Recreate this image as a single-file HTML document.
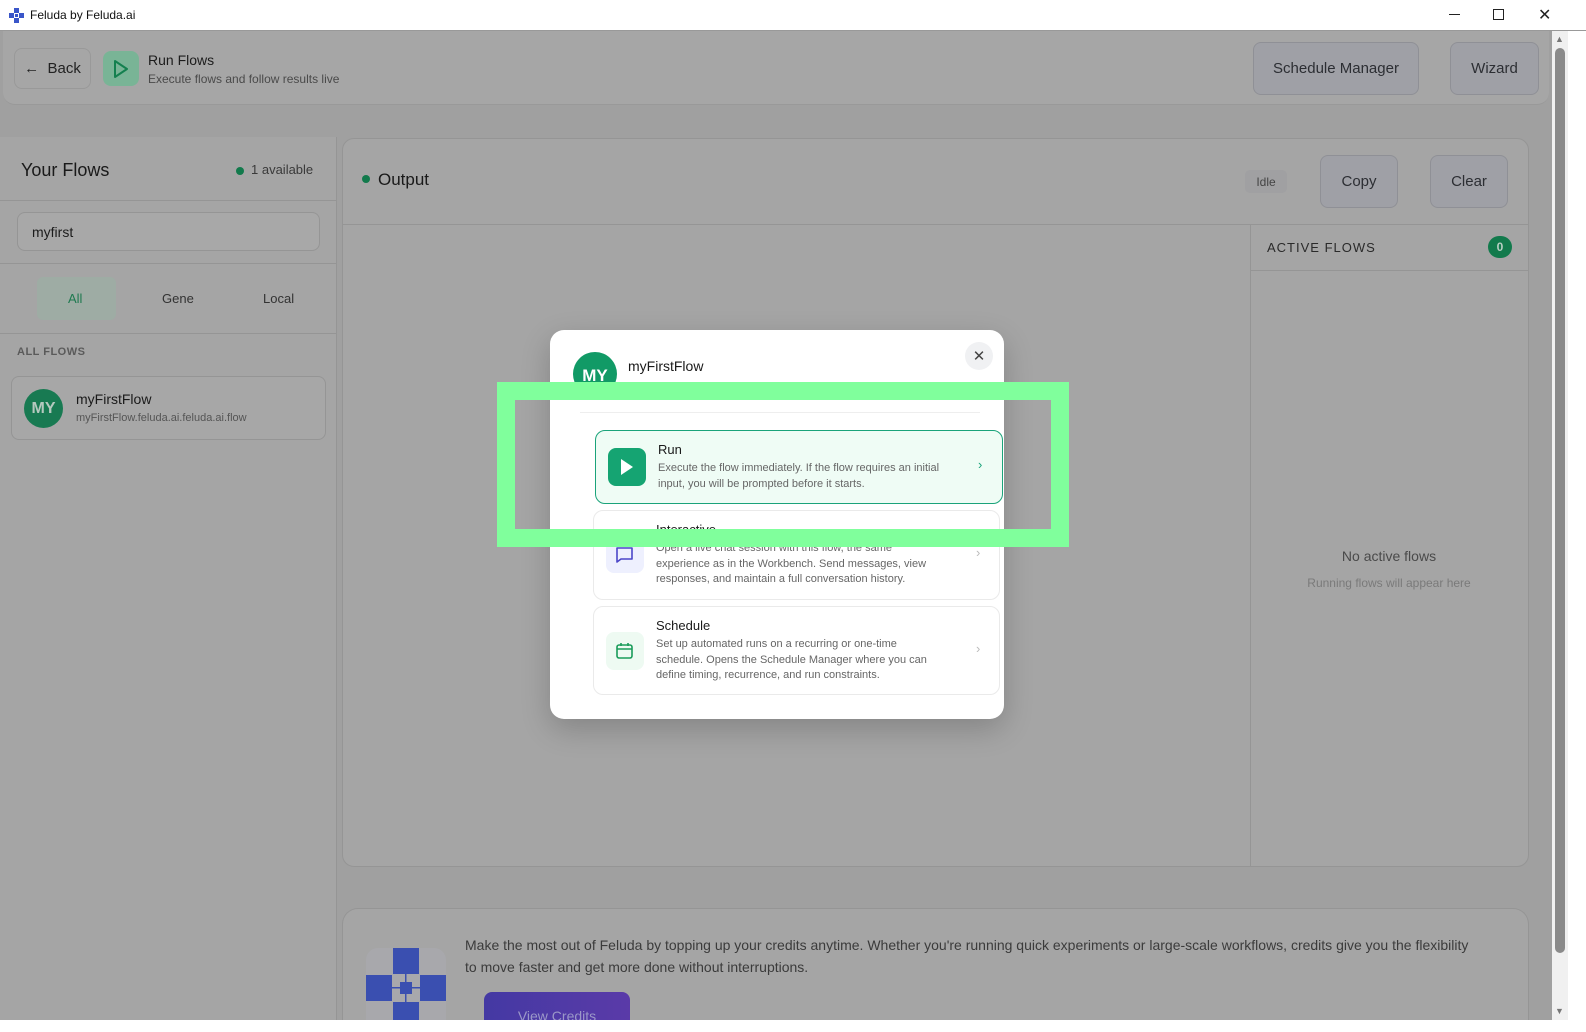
<!DOCTYPE html>
<html><head><meta charset="utf-8"><style>
*{box-sizing:border-box;margin:0;padding:0}
body{width:1586px;height:1032px;overflow:hidden;background:#fff;font-family:"Liberation Sans",sans-serif;position:relative;color:#1a1a1a}
.a{position:absolute}
.btn{position:absolute;border:1px solid #8f9096;background:#9fa0a6;border-radius:8px;color:#2c2e33;display:flex;align-items:center;justify-content:center;font-size:15px}
</style></head><body>
<div class="a" style="left:0;top:0;width:1586px;height:31px;background:#fff;border-bottom:1px solid #999"></div>
<svg class="a" style="left:9px;top:8px" width="16" height="16" viewBox="0 0 16 16"><rect x="5" y="0" width="5" height="5" fill="#3a56c9"/><rect x="0" y="5" width="5" height="5" fill="#3a56c9"/><rect x="10" y="5" width="5" height="5" fill="#3a56c9"/><rect x="5" y="10" width="5" height="5" fill="#3a56c9"/><rect x="6" y="6" width="3" height="3" fill="#3a56c9"/></svg>
<div class="a" style="left:30px;top:8px;font-size:12px;color:#111">Feluda by Feluda.ai</div>
<div class="a" style="left:1449px;top:14px;width:11px;height:1px;background:#222"></div>
<div class="a" style="left:1493px;top:9px;width:11px;height:11px;border:1px solid #222"></div>
<div class="a" style="left:1538px;top:5px;font-size:16px;color:#222">✕</div>
<div class="a" style="left:0;top:31px;width:1552px;height:989px;background:#a0a0a0"></div>
<div class="a" style="left:3px;top:31px;width:1546px;height:74px;background:#a6a6a6;border-radius:0 0 12px 12px;border-bottom:1px solid #999"></div>
<div class="btn" style="left:14px;top:48px;width:77px;height:41px;border-color:#999;background:#a6a6a6;font-size:15px;color:#222">←&nbsp; Back</div>
<div class="a" style="left:103px;top:51px;width:36px;height:35px;background:#79b496;border-radius:8px"></div>
<svg class="a" style="left:112px;top:59px" width="18" height="20" viewBox="0 0 18 20"><path d="M3 2 L15 10 L3 18 Z" fill="none" stroke="#14804f" stroke-width="2" stroke-linejoin="round"/></svg>
<div class="a" style="left:148px;top:52px;font-size:14px;color:#1c1c1c">Run Flows</div>
<div class="a" style="left:148px;top:72px;font-size:12px;color:#4a4a4a">Execute flows and follow results live</div>
<div class="btn" style="left:1253px;top:42px;width:166px;height:53px">Schedule Manager</div>
<div class="btn" style="left:1450px;top:42px;width:89px;height:53px">Wizard</div>
<div class="a" style="left:0;top:137px;width:337px;height:883px;background:#a5a5a5;border-right:1px solid #959595"></div>
<div class="a" style="left:21px;top:160px;font-size:18px;color:#1a1a1a">Your Flows</div>
<div class="a" style="left:236px;top:167px;width:8px;height:8px;border-radius:50%;background:#127a4c"></div>
<div class="a" style="left:251px;top:162px;font-size:13px;color:#3a3a3a">1 available</div>
<div class="a" style="left:0;top:200px;width:336px;height:1px;background:#959595"></div>
<div class="a" style="left:17px;top:212px;width:303px;height:39px;border:1px solid #959595;border-radius:8px;background:#a8a8a8"></div>
<div class="a" style="left:32px;top:224px;font-size:14px;color:#1c1c1c">myfirst</div>
<div class="a" style="left:0;top:263px;width:336px;height:1px;background:#959595"></div>
<div class="a" style="left:37px;top:277px;width:79px;height:43px;background:#9eaca4;border-radius:6px"></div>
<div class="a" style="left:68px;top:291px;font-size:13px;color:#1f7a50">All</div>
<div class="a" style="left:162px;top:291px;font-size:13px;color:#333">Gene</div>
<div class="a" style="left:263px;top:291px;font-size:13px;color:#333">Local</div>
<div class="a" style="left:0;top:333px;width:336px;height:1px;background:#959595"></div>
<div class="a" style="left:17px;top:346px;font-size:11px;color:#5a5a5a;font-weight:bold;letter-spacing:.5px">ALL FLOWS</div>
<div class="a" style="left:11px;top:376px;width:315px;height:64px;border:1px solid #959595;border-radius:8px;background:#a7a7a7"></div>
<div class="a" style="left:24px;top:389px;width:39px;height:39px;border-radius:50%;background:#187a52;color:#b5c9bf;font-size:16px;font-weight:bold;display:flex;align-items:center;justify-content:center">MY</div>
<div class="a" style="left:76px;top:391px;font-size:14px;color:#1a1a1a">myFirstFlow</div>
<div class="a" style="left:76px;top:412px;font-size:11px;color:#555">myFirstFlow.feluda.ai.feluda.ai.flow</div>
<div class="a" style="left:342px;top:138px;width:1187px;height:729px;background:#a5a5a5;border:1px solid #959595;border-radius:12px"></div>
<div class="a" style="left:362px;top:175px;width:8px;height:8px;border-radius:50%;background:#127a4c"></div>
<div class="a" style="left:378px;top:170px;font-size:17px;color:#1a1a1a">Output</div>
<div class="a" style="left:1245px;top:170px;width:42px;height:23px;background:#a0a0a2;border-radius:5px;font-size:12px;color:#444;display:flex;align-items:center;justify-content:center">Idle</div>
<div class="btn" style="left:1320px;top:155px;width:78px;height:53px">Copy</div>
<div class="btn" style="left:1430px;top:155px;width:78px;height:53px">Clear</div>
<div class="a" style="left:343px;top:224px;width:1185px;height:1px;background:#959595"></div>
<div class="a" style="left:1250px;top:224px;width:1px;height:642px;background:#959595"></div>
<div class="a" style="left:1251px;top:270px;width:277px;height:1px;background:#959595"></div>
<div class="a" style="left:1267px;top:240px;font-size:13px;color:#2a2a2a;letter-spacing:1px">ACTIVE FLOWS</div>
<div class="a" style="left:1488px;top:236px;width:24px;height:22px;border-radius:11px;background:#127a4c;color:#b9cfc4;font-size:12px;font-weight:bold;display:flex;align-items:center;justify-content:center">0</div>
<div class="a" style="left:1250px;top:548px;width:278px;text-align:center;font-size:14px;color:#4a4a4a">No active flows</div>
<div class="a" style="left:1250px;top:576px;width:278px;text-align:center;font-size:12px;color:#7a7a7a">Running flows will appear here</div>
<div class="a" style="left:342px;top:908px;width:1187px;height:112px;background:#a5a5a5;border:1px solid #959595;border-bottom:none;border-radius:16px 16px 0 0"></div>
<div class="a" style="left:366px;top:948px;width:80px;height:72px;background:#a8a8ac;border-radius:12px 12px 0 0"></div>
<svg class="a" style="left:366px;top:948px" width="80" height="72" viewBox="0 0 80 72"><g fill="#3a4fb0"><rect x="27" y="0" width="26" height="26"/><rect x="0" y="27" width="26" height="26"/><rect x="54" y="27" width="26" height="26"/><rect x="27" y="54" width="26" height="26"/><rect x="34" y="34" width="12" height="12"/><rect x="26" y="39" width="28" height="1.5"/><rect x="39" y="26" width="1.5" height="28"/></g></svg>
<div class="a" style="left:465px;top:934px;width:1015px;font-size:14px;line-height:22px;color:#3b3b3b">Make the most out of Feluda by topping up your credits anytime. Whether you're running quick experiments or large-scale workflows, credits give you the flexibility to move faster and get more done without interruptions.</div>
<div class="a" style="left:484px;top:992px;width:146px;height:28px;border-radius:8px 8px 0 0;background:linear-gradient(90deg,#4439a3,#5a3aa8);color:#9b98c8;font-size:14px;text-align:center;padding-top:16px;overflow:hidden;line-height:16px">View Credits</div>
<div class="a" style="left:1552px;top:31px;width:16px;height:989px;background:#f0f0f0"></div>
<div class="a" style="left:1555px;top:48px;width:10px;height:905px;background:#8a8a8a;border-radius:5px"></div>
<div class="a" style="left:1555px;top:34px;font-size:9px;color:#777">▲</div>
<div class="a" style="left:1555px;top:1006px;font-size:9px;color:#777">▼</div>
<div class="a" style="left:1568px;top:31px;width:18px;height:1001px;background:#fff"></div>
<div class="a" style="left:0;top:1020px;width:1586px;height:12px;background:#fff"></div>
<div class="a" style="left:550px;top:330px;width:454px;height:389px;background:#fff;border-radius:14px;box-shadow:0 10px 30px rgba(0,0,0,.2)"></div>
<div class="a" style="left:965px;top:342px;width:28px;height:28px;border-radius:50%;background:#f0f1f3;color:#444;font-size:15px;display:flex;align-items:center;justify-content:center">✕</div>
<div class="a" style="left:573px;top:352px;width:44px;height:44px;border-radius:50%;background:#119a66;color:#fff;font-size:17px;font-weight:bold;display:flex;align-items:center;justify-content:center;padding-top:4px">MY</div>
<div class="a" style="left:628px;top:358px;font-size:14px;color:#1a1a1a">myFirstFlow</div>
<div class="a" style="left:580px;top:412px;width:400px;height:1px;background:#eee"></div>
<div class="a" style="left:595px;top:430px;width:408px;height:74px;border:1px solid #1aa37a;border-radius:10px;background:#effcf5"></div>
<div class="a" style="left:608px;top:448px;width:38px;height:38px;border-radius:8px;background:#15a472"></div>
<svg class="a" style="left:619px;top:458px" width="16" height="18" viewBox="0 0 16 18"><path d="M2 1 L14 9 L2 17 Z" fill="#fff"/></svg>
<div class="a" style="left:658px;top:442px;font-size:13px;color:#1a1a1a">Run</div>
<div class="a" style="left:658px;top:461px;width:300px;font-size:11px;line-height:15.5px;color:#666">Execute the flow immediately. If the flow requires an initial input, you will be prompted before it starts.</div>
<div class="a" style="left:978px;top:457px;font-size:13px;color:#1aa37a">›</div>
<div class="a" style="left:593px;top:510px;width:407px;height:90px;border:1px solid #eaeaea;border-radius:10px;background:#fff"></div>
<div class="a" style="left:656px;top:522px;font-size:13px;color:#1a1a1a">Interactive</div>
<div class="a" style="left:606px;top:535px;width:38px;height:38px;border-radius:8px;background:#eef0fe"></div>
<svg class="a" style="left:615px;top:545px" width="20" height="20" viewBox="0 0 20 20"><path d="M2 3 H17 V14 H6 L2 17 Z" fill="none" stroke="#4b46c8" stroke-width="1.6" stroke-linejoin="round"/></svg>
<div class="a" style="left:656px;top:541px;width:290px;font-size:11px;line-height:15.5px;color:#666">Open a live chat session with this flow, the same experience as in the Workbench. Send messages, view responses, and maintain a full conversation history.</div>
<div class="a" style="left:976px;top:545px;font-size:13px;color:#bbb">›</div>
<div class="a" style="left:593px;top:606px;width:407px;height:89px;border:1px solid #eaeaea;border-radius:10px;background:#fff"></div>
<div class="a" style="left:656px;top:618px;font-size:13px;color:#1a1a1a">Schedule</div>
<div class="a" style="left:606px;top:632px;width:38px;height:38px;border-radius:8px;background:#eefaf2"></div>
<svg class="a" style="left:615px;top:641px" width="20" height="20" viewBox="0 0 20 20"><rect x="2" y="4" width="15" height="13" rx="2" fill="none" stroke="#1a9c5a" stroke-width="1.6"/><path d="M2 8 H17 M6 2 V5 M13 2 V5" stroke="#1a9c5a" stroke-width="1.6"/></svg>
<div class="a" style="left:656px;top:637px;width:290px;font-size:11px;line-height:15.5px;color:#666">Set up automated runs on a recurring or one-time schedule. Opens the Schedule Manager where you can define timing, recurrence, and run constraints.</div>
<div class="a" style="left:976px;top:641px;font-size:13px;color:#bbb">›</div>
<div class="a" style="left:497px;top:382px;width:572px;height:165px;border:18px solid #80ff9c"></div>
</body></html>
